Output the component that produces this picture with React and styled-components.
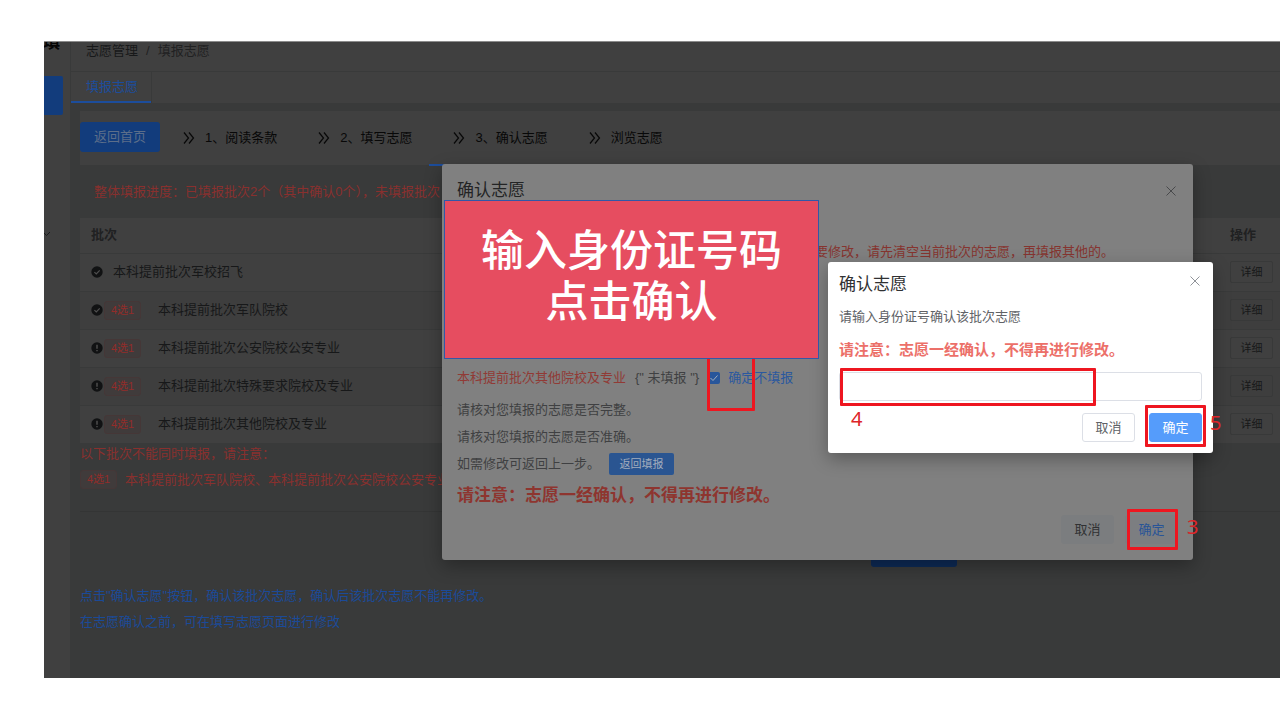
import React from 'react';
import styled, { createGlobalStyle, ThemeProvider } from 'styled-components';

const theme = {
  page: '#393a3a',
  panel: '#404040',
  stripe: '#3e3e3e',
  line: '#393a3a',
  ink: '#171819',
  blue: '#123c7c',
  blueText: '#1c4d9c',
  redText: '#89302e',
  dialog: '#808080',
  mark: '#ee1620',
};

const GlobalStyle = createGlobalStyle`
  * {
    box-sizing: border-box;
  }
  body {
    margin: 0;
    background: #fff;
    font-family: 'Liberation Sans', 'Noto Sans CJK SC', sans-serif;
    font-size: 13px;
    line-height: 20px;
  }
  button, input {
    font: inherit;
  }
  p, h2 {
    margin: 0;
    padding: 0;
  }
`;

const Screen = styled.div`
  position: relative;
  display: flex;
  margin: 41px 0 42px 44px;
  overflow: hidden;
  background: ${({ theme }) => theme.page};
  border-top: 1px solid #8c8c8c;
  color: ${({ theme }) => theme.ink};
`;

const Sidebar = styled.aside`
  flex: none;
  width: 27px;
  background: ${({ theme }) => theme.panel};
  border-right: 1px solid ${({ theme }) => theme.line};
`;

const Brand = styled.div`
  height: 34px;
  overflow: hidden;
  display: flex;
  justify-content: flex-end;
  padding-right: 10px;
  font-size: 17px;
  font-weight: 700;
  line-height: 2px;
  color: #050505;
`;

const ActiveItem = styled.a`
  display: block;
  width: 19px;
  height: 39px;
  border-radius: 0 2px 2px 0;
  background: ${({ theme }) => theme.blue};
`;

const SubMenu = styled.div`
  margin-top: 111px;
`;

const Main = styled.main`
  flex: 1;
  min-width: 0;
`;

const Breadcrumb = styled.nav`
  display: flex;
  gap: 8px;
  height: 30px;
  padding: 0 15px;
  line-height: 17px;
  background: ${({ theme }) => theme.panel};
  border-bottom: 1px solid ${({ theme }) => theme.line};
  a {
    color: inherit;
    text-decoration: none;
  }
  span {
    color: #202122;
  }
`;

const TabBar = styled.div`
  display: flex;
  height: 31px;
  background: ${({ theme }) => theme.panel};
`;

const Tab = styled.a`
  padding: 0 13px 0 15px;
  line-height: 30px;
  color: ${({ theme }) => theme.blueText};
  text-decoration: none;
  border-right: 1px solid ${({ theme }) => theme.line};
  box-shadow: inset 0 -2px ${({ theme }) => theme.blueText};
`;

const Content = styled.div`
  padding: 8px 0 43px 9px;
`;

const Steps = styled.div`
  display: flex;
  height: 55px;
  padding-top: 11px;
  background: ${({ theme }) => theme.panel};
  border-bottom: 1px solid ${({ theme }) => theme.line};
`;

const BackButton = styled.button`
  height: 30px;
  padding: 0 14px;
  margin-right: 23px;
  border: 0;
  border-radius: 3px;
  color: #5c6e8a;
  background: ${({ theme }) => theme.blue};
`;

const Step = styled.div`
  display: flex;
  align-items: center;
  gap: 10px;
  height: 44px;
  padding-bottom: 12px;
  margin-right: 41px;
  color: #080808;
  white-space: nowrap;
`;

const CurrentStep = styled(Step)`
  padding-left: 24px;
  margin-left: -24px;
  border-bottom: 2px solid ${({ theme }) => theme.blueText};
  padding-bottom: 10px;
`;

const Progress = styled.p`
  height: 52px;
  padding-left: 14px;
  line-height: 52px;
  color: ${({ theme }) => theme.redText};
  white-space: nowrap;
`;

const BatchTable = styled.table`
  width: 100%;
  border-collapse: collapse;
  th, td {
    padding: 0 11px;
    text-align: left;
    background: ${({ theme }) => theme.panel};
    border-bottom: 1px solid ${({ theme }) => theme.line};
  }
  th {
    height: 35px;
    color: #202122;
  }
  td {
    height: 38px;
  }
  tbody tr:nth-child(even) td {
    background: ${({ theme }) => theme.stripe};
  }
  th:last-child, td:last-child {
    width: 61px;
    padding-right: 0;
  }
`;

const BatchName = styled.div`
  display: flex;
  align-items: center;
`;

const StatusIcon = styled.svg`
  flex: none;
  width: 12px;
  height: 12px;
`;

const Tag = styled.span`
  flex: none;
  width: 37px;
  height: 19px;
  margin-left: ${({ $first }) => ($first ? '0' : '1px')};
  border: 1px solid #453737;
  border-radius: 3px;
  background: #403b3b;
  font-size: 11px;
  line-height: 17px;
  text-align: center;
  color: #922d2a;
`;

const Name = styled.span`
  padding-left: ${({ $tagged }) => ($tagged ? '17px' : '10px')};
`;

const DetailButton = styled.button`
  display: block;
  width: 43px;
  height: 22px;
  padding: 0;
  border: 1px solid #383939;
  border-radius: 2px;
  background: transparent;
  font-size: 11px;
  color: ${({ theme }) => theme.ink};
`;

const Notice = styled.div`
  height: 68px;
  border-bottom: 1px solid #343535;
  color: ${({ theme }) => theme.redText};
  white-space: nowrap;
  div {
    display: flex;
    align-items: center;
    gap: 8px;
    margin-top: 6px;
  }
`;

const SubmitRow = styled.div`
  display: flex;
  justify-content: center;
  padding: 24px 0 0 468px;
`;

const SubmitButton = styled.button`
  width: 86px;
  height: 31px;
  border: 0;
  border-radius: 3px;
  color: #5c6e8a;
  background: #0d2a56;
`;

const Hints = styled.div`
  padding-top: 16px;
  line-height: 26px;
  color: #1b4a98;
`;

const Dialog = styled.section`
  position: absolute;
  left: 398px;
  top: 122px;
  width: 751px;
  height: 396px;
  display: flex;
  flex-direction: column;
  padding: 16px 15px;
  border-radius: 3px;
  background: ${({ theme }) => theme.dialog};
  box-shadow: 0 6px 18px rgba(0, 0, 0, 0.3);
  color: #3f4042;
`;

const ConfirmDialog = styled(Dialog)`
  left: 784px;
  top: 220px;
  width: 385px;
  height: 191px;
  padding: 12px 11px 11px;
  background: #fff;
  color: #606266;
`;

const DialogHead = styled.header`
  display: flex;
  justify-content: space-between;
  align-items: ${({ $dim }) => ($dim ? 'center' : 'flex-start')};
  h2 {
    font-size: 17px;
    font-weight: 400;
    line-height: 22px;
    color: ${({ $dim }) => ($dim ? '#232425' : '#303133')};
  }
`;

const CloseButton = styled.button`
  display: flex;
  width: 14px;
  height: 14px;
  padding: 0;
  border: 0;
  background: none;
  color: ${({ $dim }) => ($dim ? '#48494b' : '#909399')};
`;

const Limits = styled.p`
  height: 129px;
  padding: 40px 0 0 358px;
  white-space: nowrap;
  color: #86342f;
`;

const SkipRow = styled.div`
  display: flex;
  align-items: center;
  height: 20px;
  margin: 37px 0 8px;
  white-space: nowrap;
  strong {
    font-weight: 400;
    color: #913a35;
  }
  span {
    margin: 0 9px;
  }
  label {
    display: flex;
    align-items: center;
    gap: 8px;
    color: #2a589f;
  }
`;

const CheckWrap = styled.div`
  display: grid;
  > * {
    grid-area: 1 / 1;
  }
  svg {
    pointer-events: none;
  }
`;

const CheckBox = styled.input`
  appearance: none;
  width: 12px;
  height: 12px;
  margin: 0;
  border-radius: 2px;
  background: #28569b;
`;

const Line = styled.div`
  display: flex;
  align-items: center;
  gap: 9px;
  height: 27px;
`;

const SmallButton = styled.button`
  width: 65px;
  height: 22px;
  padding: 0;
  border: 0;
  border-radius: 2px;
  background: #2a5591;
  color: #a3adbd;
  font-size: 11px;
`;

const Warning = styled.p`
  font-weight: 700;
  font-size: ${({ $large }) => ($large ? '17px' : '15px')};
  line-height: ${({ $large }) => ($large ? '38px' : '22px')};
  color: ${({ $large }) => ($large ? '#8e352f' : '#ec7069')};
`;

const Footer = styled.footer`
  display: flex;
  justify-content: flex-end;
  gap: ${({ $gap }) => $gap}px;
  margin-top: auto;
`;

const buttonLook = {
  plain: 'background: #fff; border-color: #dcdfe6; color: #606266;',
  primary: 'background: #559cfb; border-color: #559cfb; color: #fff;',
  dimPlain: 'background: #7b7d7f; border-color: #7b7d7f; color: #303133;',
  dimLink: 'background: #7c7e81; border-color: #7c7e81; color: #285497;',
};

const DialogButton = styled.button`
  width: 53px;
  height: 29px;
  padding: 0;
  border: 1px solid;
  border-radius: 3px;
  ${({ $look }) => buttonLook[$look]}
`;

const IdField = styled.label`
  display: flex;
  flex-direction: column;
  gap: 11px;
  padding-top: 10px;
  line-height: 22px;
`;

const IdInput = styled.input`
  width: 100%;
  height: 29px;
  padding: 0 10px;
  border: 1px solid #dcdfe6;
  border-radius: 3px;
  background: #fff;
`;

const Marker = styled.div`
  position: absolute;
  left: ${({ $x }) => $x}px;
  top: ${({ $y }) => $y}px;
  width: ${({ $w }) => $w}px;
  height: ${({ $h }) => $h}px;
  border: 3px solid ${({ theme }) => theme.mark};
  border-radius: 1px;
  pointer-events: none;
`;

const MarkerNumber = styled.span`
  position: absolute;
  left: ${({ $x }) => $x}px;
  top: ${({ $y }) => $y}px;
  font-family: 'Noto Sans', sans-serif;
  font-size: 20px;
  line-height: 24px;
  color: #dd2529;
`;

const Banner = styled.div`
  position: absolute;
  left: 400px;
  top: 158px;
  width: 375px;
  height: 159px;
  padding-top: 21px;
  border: 1px solid #3258a8;
  background: #e64d60;
  color: #fff;
  font-family: 'Noto Sans CJK SC', sans-serif;
  font-size: 43px;
  font-weight: 500;
  line-height: 51px;
  text-align: center;
  white-space: nowrap;
`;

const batches = [
  { name: '本科提前批次军校招飞', done: true, tagged: false },
  { name: '本科提前批次军队院校', done: true, tagged: true },
  { name: '本科提前批次公安院校公安专业', done: false, tagged: true },
  { name: '本科提前批次特殊要求院校及专业', done: false, tagged: true },
  { name: '本科提前批次其他院校及专业', done: false, tagged: true },
];

const Chevrons = () => (
  <svg width="12" height="12" viewBox="0 0 12 12" fill="none" stroke="currentColor" strokeWidth="1.2">
    <path d="M1 .5 5.5 6 1 11.5M6 .5 10.5 6 6 11.5" />
  </svg>
);

const Cross = () => (
  <svg width="14" height="14" viewBox="0 0 14 14" fill="none" stroke="currentColor" strokeWidth="1">
    <path d="m2.5 2.5 9 9M11.5 2.5l-9 9" />
  </svg>
);

const Status = ({ done }) => (
  <StatusIcon viewBox="0 0 12 12">
    <circle cx="6" cy="6" r="5.7" fill="#111213" />
    {done ? (
      <path d="m3.4 6.1 1.9 1.8 3.4-3.6" fill="none" stroke="#505050" strokeWidth="1.2" />
    ) : (
      <path d="M6 2.7v4M6 8v1.3" fill="none" stroke="#505050" strokeWidth="1.4" />
    )}
  </StatusIcon>
);

const App = () => {
  return (
    <ThemeProvider theme={theme}>
      <GlobalStyle />
      <Screen>
        <Sidebar>
          <Brand>填</Brand>
          <ActiveItem href="#fill" aria-label="填报志愿" />
          <SubMenu>
            <svg width="7" height="12" viewBox="0 0 7 12" fill="none" stroke="#1b1c1d">
              <path d="m0 5 2.5 2.5L6 4" />
            </svg>
          </SubMenu>
        </Sidebar>
        <Main>
          <Breadcrumb>
            <a href="#manage">志愿管理</a>
            <span>/</span>
            <span>填报志愿</span>
          </Breadcrumb>
          <TabBar>
            <Tab href="#fill">填报志愿</Tab>
          </TabBar>
          <Content>
            <Steps>
              <BackButton>返回首页</BackButton>
              <Step><Chevrons />1、阅读条款</Step>
              <Step><Chevrons />2、填写志愿</Step>
              <CurrentStep><Chevrons />3、确认志愿</CurrentStep>
              <Step><Chevrons />浏览志愿</Step>
            </Steps>
            <Progress>整体填报进度：已填报批次2个（其中确认0个），未填报批次</Progress>
            <BatchTable>
              <thead>
                <tr>
                  <th>批次</th>
                  <th>操作</th>
                </tr>
              </thead>
              <tbody>
                {batches.map(({ name, done, tagged }) => (
                  <tr key={name}>
                    <td>
                      <BatchName>
                        <Status done={done} />
                        {tagged && <Tag>4选1</Tag>}
                        <Name $tagged={tagged}>{name}</Name>
                      </BatchName>
                    </td>
                    <td><DetailButton>详细</DetailButton></td>
                  </tr>
                ))}
              </tbody>
            </BatchTable>
            <Notice>
              <p>以下批次不能同时填报，请注意：</p>
              <div>
                <Tag $first>4选1</Tag>
                本科提前批次军队院校、本科提前批次公安院校公安专业
              </div>
            </Notice>
            <SubmitRow>
              <SubmitButton aria-label="确认志愿" />
            </SubmitRow>
            <Hints>
              <p>点击"确认志愿"按钮，确认该批次志愿，确认后该批次志愿不能再修改。</p>
              <p>在志愿确认之前，可在填写志愿页面进行修改</p>
            </Hints>
          </Content>
        </Main>

        <Dialog role="dialog" aria-label="确认志愿">
          <DialogHead $dim>
            <h2>确认志愿</h2>
            <CloseButton $dim aria-label="关闭"><Cross /></CloseButton>
          </DialogHead>
          <Limits>要修改，请先清空当前批次的志愿，再填报其他的。</Limits>
          <SkipRow>
            <strong>本科提前批次其他院校及专业</strong>
            <span>{'{" 未填报 "}'}</span>
            <label>
              <CheckWrap>
                <CheckBox type="checkbox" defaultChecked />
                <svg width="12" height="12" viewBox="0 0 12 12" fill="none" stroke="#a5afbd">
                  <path d="m2.5 6 2.5 2.5 4.5-5" />
                </svg>
              </CheckWrap>
              确定不填报
            </label>
          </SkipRow>
          <Line>请核对您填报的志愿是否完整。</Line>
          <Line>请核对您填报的志愿是否准确。</Line>
          <Line>如需修改可返回上一步。<SmallButton>返回填报</SmallButton></Line>
          <Warning $large>请注意：志愿一经确认，不得再进行修改。</Warning>
          <Footer $gap={11}>
            <DialogButton $look="dimPlain">取消</DialogButton>
            <DialogButton $look="dimLink">确定</DialogButton>
          </Footer>
        </Dialog>

        <ConfirmDialog role="dialog" aria-label="确认志愿">
          <DialogHead>
            <h2>确认志愿</h2>
            <CloseButton aria-label="关闭"><Cross /></CloseButton>
          </DialogHead>
          <IdField>
            <span>请输入身份证号确认该批次志愿</span>
            <Warning as="span">请注意：志愿一经确认，不得再进行修改。</Warning>
            <IdInput type="text" />
          </IdField>
          <Footer $gap={14}>
            <DialogButton $look="plain">取消</DialogButton>
            <DialogButton $look="primary">确定</DialogButton>
          </Footer>
        </ConfirmDialog>

        <Marker $x={663} $y={310} $w={48} $h={59} />
        <Marker $x={796} $y={326} $w={256} $h={38} />
        <Marker $x={1101} $y={363} $w={61} $h={42} />
        <Marker $x={1083} $y={467} $w={51} $h={41} />
        <MarkerNumber $x={807} $y={365}>4</MarkerNumber>
        <MarkerNumber $x={1166} $y={369}>5</MarkerNumber>
        <MarkerNumber $x={1143} $y={473}>3</MarkerNumber>
        <Banner>
          输入身份证号码
          <br />
          点击确认
        </Banner>
      </Screen>
    </ThemeProvider>
  );
};

export default App;
